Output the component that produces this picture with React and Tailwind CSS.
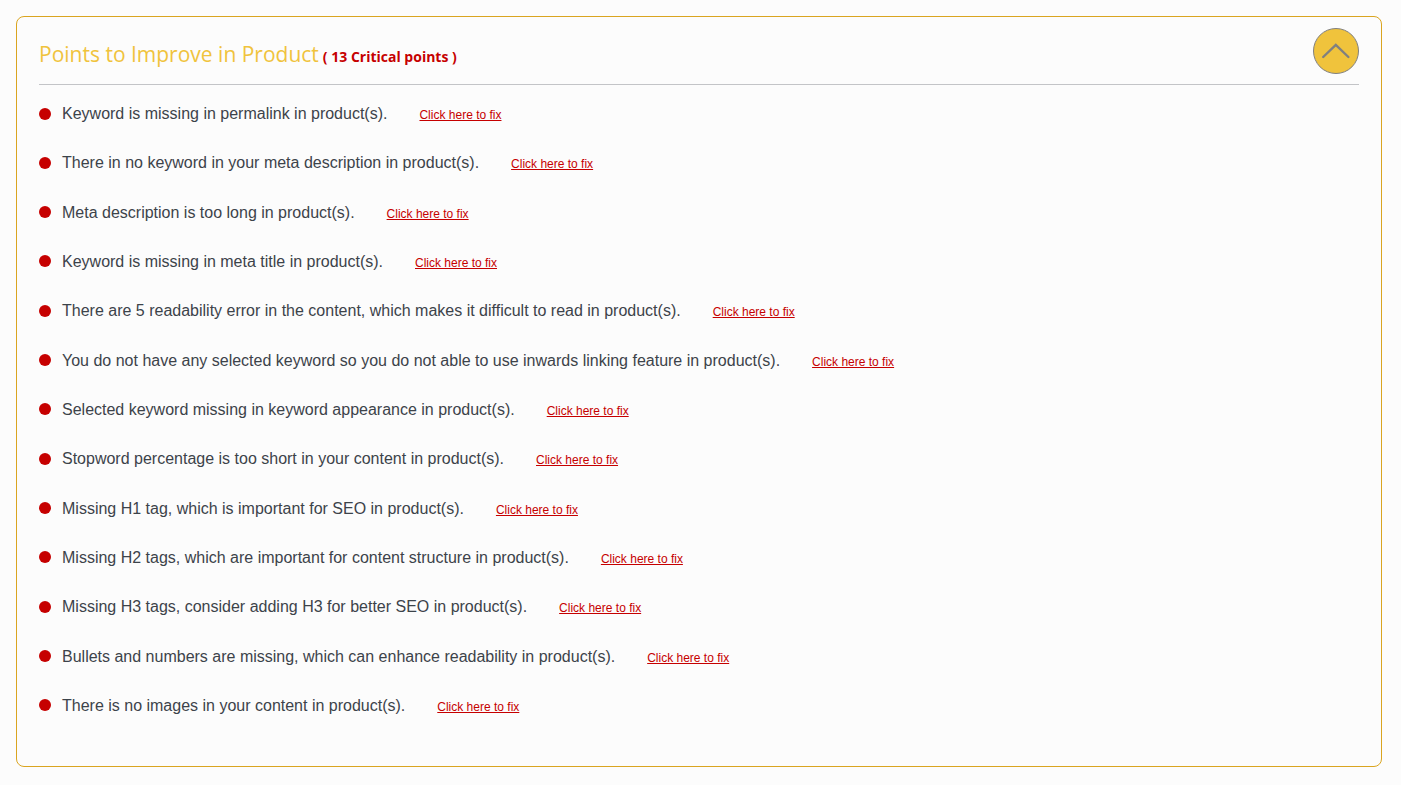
import { useState } from 'react';

const points = [
  'Keyword is missing in permalink in product(s).',
  'There in no keyword in your meta description in product(s).',
  'Meta description is too long in product(s).',
  'Keyword is missing in meta title in product(s).',
  'There are 5 readability error in the content, which makes it difficult to read in product(s).',
  'You do not have any selected keyword so you do not able to use inwards linking feature in product(s).',
  'Selected keyword missing in keyword appearance in product(s).',
  'Stopword percentage is too short in your content in product(s).',
  'Missing H1 tag, which is important for SEO in product(s).',
  'Missing H2 tags, which are important for content structure in product(s).',
  'Missing H3 tags, consider adding H3 for better SEO in product(s).',
  'Bullets and numbers are missing, which can enhance readability in product(s).',
  'There is no images in your content in product(s).',
];

function PointRow({ text }) {
  return (
    <li className="flex items-center">
      <span className="w-3 h-3 mr-[11px] mb-px shrink-0 rounded-full bg-[#c60000]" />
      <span className="text-base text-[#3c434a]">{text}</span>
      <a
        href="#fix"
        className="ml-8 pt-0.5 shrink-0 text-xs text-[#c60000] underline"
      >
        Click here to fix
      </a>
    </li>
  );
}

export default function App() {
  const [open, setOpen] = useState(true);

  return (
    <main className="min-h-screen flex flex-col bg-[#fcfcfc] pt-4 pb-[18px] pl-4 pr-[19px] font-['Liberation_Sans',Arial,sans-serif]">
      <section className="flex-1 flex flex-col rounded-lg border border-[#daa520] px-[22px] pt-[11px] pb-12">
        <header className="flex items-center justify-between border-b border-[#c3c4c7] pb-2.5">
          <h2 className="flex items-baseline gap-1 pt-2 font-['Open_Sans','Noto_Sans',sans-serif]">
            <span className="text-[21px] text-[#f0c33c]">Points to Improve in Product</span>
            <span className="text-sm font-bold text-[#c60000]">( {points.length} Critical points )</span>
          </h2>
          <button
            type="button"
            aria-label="Toggle points"
            aria-expanded={open}
            onClick={() => setOpen(!open)}
            className="w-[46px] h-[46px] shrink-0 flex items-center justify-center rounded-full border border-[#808080] bg-[#f0c33c]"
          >
            <svg
              viewBox="0 0 30 18"
              className={open ? 'w-[30px] h-[18px]' : 'w-[30px] h-[18px] rotate-180'}
              fill="none"
              stroke="#808080"
              strokeWidth="2.4"
              strokeLinecap="round"
            >
              <path d="M2.2 15 14.8 2.8l12.6 12.2" />
            </svg>
          </button>
        </header>
        {open && (
          <ul className="flex-1 flex flex-col justify-between pt-[17px]">
            {points.map((text) => (
              <PointRow key={text} text={text} />
            ))}
          </ul>
        )}
      </section>
    </main>
  );
}
